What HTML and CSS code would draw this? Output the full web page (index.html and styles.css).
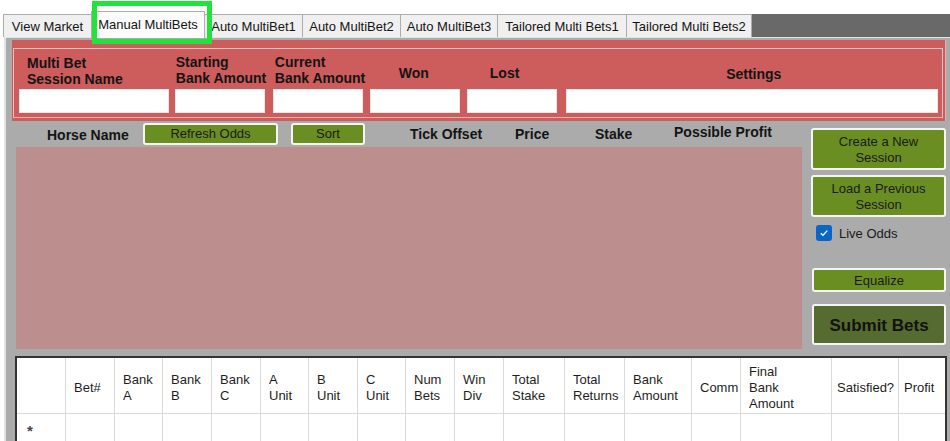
FILE: index.html
```html
<!DOCTYPE html>
<html>
<head>
<meta charset="utf-8">
<link rel="stylesheet" href="styles.css">
</head>
<body>
<div class="app">
  <div class="tabs">
    <div class="tab-lead"></div>
    <div class="tab w-view">View Market</div>
    <div class="tab active w-manual">Manual MultiBets</div>
    <div class="tab w-auto1">Auto MultiBet1</div>
    <div class="tab w-auto2">Auto MultiBet2</div>
    <div class="tab w-auto3">Auto MultiBet3</div>
    <div class="tab w-tail1">Tailored Multi Bets1</div>
    <div class="tab w-tail2">Tailored Multi Bets2</div>
    <div class="tab-fill"></div>
  </div>

  <div class="page">
    <div class="session">
      <div class="session-inner">
        <div class="field f-name">
          <div class="lbl lbl-two lbl-name">Multi Bet<br>Session Name</div>
          <div class="input"></div>
        </div>
        <div class="field f-mid g6">
          <div class="lbl lbl-two lbl-start">Starting<br>Bank Amount</div>
          <div class="input"></div>
        </div>
        <div class="field f-mid g8">
          <div class="lbl lbl-two lbl-cur">Current<br>Bank Amount</div>
          <div class="input"></div>
        </div>
        <div class="field f-mid g7">
          <div class="lbl lbl-one lbl-won">Won</div>
          <div class="input"></div>
        </div>
        <div class="field f-mid g7">
          <div class="lbl lbl-one lbl-lost">Lost</div>
          <div class="input"></div>
        </div>
        <div class="field f-settings g9">
          <div class="lbl lbl-one lbl-set">Settings</div>
          <div class="input"></div>
        </div>
      </div>
    </div>

    <div class="middle">
      <div class="main">
        <div class="hdr-row">
          <div class="hdr h-horse">Horse Name</div>
          <div class="btn btn-refresh">Refresh Odds</div>
          <div class="btn btn-sort">Sort</div>
          <div class="hdr h-tick">Tick Offset</div>
          <div class="hdr h-price">Price</div>
          <div class="hdr h-stake">Stake</div>
          <div class="hdr h-profit">Possible Profit</div>
        </div>
        <div class="pink"></div>
      </div>
      <div class="side">
        <div class="btn btn-big btn-create">Create a New<br>Session</div>
        <div class="btn btn-big btn-load">Load a Previous<br>Session</div>
        <div class="check-row">
          <span class="checkbox"><svg width="10" height="10" viewBox="0 0 10 10"><path d="M1.8 5.2 L4 7.3 L8.3 2.6" fill="none" stroke="#fff" stroke-width="1.3"/></svg></span>
          <span class="check-label">Live Odds</span>
        </div>
        <div class="btn btn-equalize">Equalize</div>
        <div class="btn btn-submit">Submit Bets</div>
      </div>
    </div>

    <div class="grid">
      <div class="cell head"></div>
      <div class="cell head">Bet#</div>
      <div class="cell head">Bank<br>A</div>
      <div class="cell head">Bank<br>B</div>
      <div class="cell head">Bank<br>C</div>
      <div class="cell head">A<br>Unit</div>
      <div class="cell head">B<br>Unit</div>
      <div class="cell head">C<br>Unit</div>
      <div class="cell head">Num<br>Bets</div>
      <div class="cell head">Win<br>Div</div>
      <div class="cell head">Total<br>Stake</div>
      <div class="cell head">Total<br>Returns</div>
      <div class="cell head">Bank<br>Amount</div>
      <div class="cell head">Comm</div>
      <div class="cell head">Final<br>Bank<br>Amount</div>
      <div class="cell head pad-s">Satisfied?</div>
      <div class="cell head pad-s">Profit</div>

      <div class="cell row rowhdr">*</div>
      <div class="cell row"></div>
      <div class="cell row"></div>
      <div class="cell row"></div>
      <div class="cell row"></div>
      <div class="cell row"></div>
      <div class="cell row"></div>
      <div class="cell row"></div>
      <div class="cell row"></div>
      <div class="cell row"></div>
      <div class="cell row"></div>
      <div class="cell row"></div>
      <div class="cell row"></div>
      <div class="cell row"></div>
      <div class="cell row"></div>
      <div class="cell row"></div>
      <div class="cell row"></div>
    </div>
  </div>

  <div class="highlight"></div>
</div>
</body>
</html>
```

FILE: styles.css
```css
* { box-sizing: border-box; }
html, body { margin: 0; padding: 0; }
body {
  background: #ffffff;
  font-family: "Liberation Sans", Arial, sans-serif;
  color: #1a1a1a;
  width: 950px;
  height: 441px;
  overflow: hidden;
}
.app {
  position: relative;
  width: 950px;
  height: 441px;
}

/* ---------- tabs ---------- */
.tabs {
  display: flex;
  align-items: flex-end;
  height: 37px;
  position: relative;
  z-index: 2;
}
.tab-lead { width: 3px; }
.tab {
  height: 23px;
  background: #f0f0f0;
  border: 1px solid #adadad;
  border-bottom: none;
  border-right: none;
  font-size: 13px;
  line-height: 24px;
  text-align: center;
  white-space: nowrap;
  color: #141414;
}
.tab.active {
  height: 27px;
  margin-bottom: -1px;
  background: #fbfbfb;
  line-height: 25px;
  border-right: 1px solid #adadad;
}
.tab.active + .tab { border-left: none; }
.w-view { width: 88px; }
.w-manual { width: 114px; }
.w-auto1 { width: 97px; }
.w-auto2 { width: 98px; }
.w-auto3 { width: 97px; }
.w-tail1 { width: 129px; }
.w-tail2 { width: 126px; border-right: 1px solid #adadad; }
.tab-fill {
  flex: 1;
  height: 23px;
  background: #696969;
}

/* ---------- page ---------- */
.page {
  margin-left: 4px;
  height: 404px;
  background: #ababab;
  border-top: 1px solid #e4e4e4;
  border-left: 2px solid #e2e2e2;
  padding-top: 2px;
}

.session {
  margin-left: 6px;
  width: 934px;
  height: 81px;
  background: #cd5c5c;
  padding: 8px 2px 3px 1px;
  border-right: 1px solid #e3b0b0;
}
.session-inner {
  height: 100%;
  border: 1px solid rgba(255, 225, 225, 0.75);
  border-bottom-color: rgba(255, 225, 225, 0.6);
  display: flex;
  align-items: flex-end;
  padding: 0 4px 4px 5px;
}
.field {
  display: flex;
  flex-direction: column;
}
.f-name { width: 150px; }
.f-mid { width: 90px; }
.f-settings { width: 373px; }
.g6 { margin-left: 6px; }
.g7 { margin-left: 7px; }
.g8 { margin-left: 8px; }
.g9 { margin-left: 9px; }

.lbl {
  height: 40px;
  font-weight: bold;
  font-size: 14px;
  line-height: 16px;
  color: #141414;
  white-space: nowrap;
}
.lbl-two { padding-top: 6px; }
.lbl-name { padding-left: 8px; }
.lbl-start { padding-left: 1px; padding-top: 5px; }
.lbl-cur { padding-left: 2px; padding-top: 5px; }
.lbl-one { padding-top: 16px; text-align: center; }
.lbl-won { padding-right: 2px; }
.lbl-lost { padding-right: 14px; }
.lbl-set { padding-top: 17px; padding-left: 4px; }

.input {
  height: 24px;
  background: #ffffff;
  border: 1px solid #e8e8e8;
}

/* ---------- middle ---------- */
.middle {
  display: flex;
  margin-left: 10px;
}
.main { width: 786px; }
.hdr-row {
  display: flex;
  align-items: flex-start;
  height: 26px;
  padding-top: 2px;
}
.hdr {
  font-weight: bold;
  font-size: 14px;
  line-height: 16px;
  color: #141414;
  white-space: nowrap;
  padding-top: 4px;
}
.h-horse { width: 127px; padding-left: 31px; }
.h-tick { margin-left: 45px; width: 105px; padding-top: 3px; }
.h-price { width: 80px; padding-top: 3px; }
.h-stake { width: 79px; padding-top: 3px; }
.h-profit { padding-top: 1px; }

.btn {
  background: #6b8e23;
  border: 2px solid #f4f4f4;
  border-radius: 3px;
  color: #1a1a1a;
  font-size: 13px;
  text-align: center;
  white-space: nowrap;
}
.btn-refresh { width: 135px; height: 22px; line-height: 17px; }
.btn-sort { width: 74px; height: 22px; line-height: 18px; margin-left: 13px; }

.pink {
  height: 202px;
  background: #bc8e8e;
}

.side {
  margin-left: 9px;
  width: 135px;
  display: flex;
  flex-direction: column;
  padding-top: 7px;
}
.btn-big {
  height: 42px;
  line-height: 16px;
  padding-top: 4px;
}
.btn-load { margin-top: 5px; }
.check-row {
  display: flex;
  align-items: center;
  margin-top: 8px;
  height: 16px;
  padding-left: 5px;
}
.checkbox {
  width: 16px;
  height: 16px;
  border-radius: 3px;
  background: #0a66c2;
  display: flex;
  align-items: center;
  justify-content: center;
}
.checkbox svg { display: block; }
.check-label {
  margin-left: 7px;
  font-size: 13px;
  color: #1a1a1a;
}
.btn-equalize {
  margin-top: 27px;
  margin-left: 1px;
  height: 24px;
  line-height: 21px;
}
.btn-submit {
  margin-top: 12px;
  margin-left: 1px;
  height: 41px;
  line-height: 39px;
  background: #556b2f;
  font-weight: bold;
  font-size: 17px;
  color: #121212;
}

/* ---------- grid ---------- */
.grid {
  margin-top: 7px;
  margin-left: 9px;
  width: 932px;
  height: 100px;
  background: #ffffff;
  border: 2px solid #333333;
  border-bottom: none;
  display: grid;
  grid-template-columns: 49px 49px 48px 49px 49px 48px 49px 48px 49px 49px 61px 60px 67px 49px 91px 67px 46px;
  grid-template-rows: 56px 40px;
  align-content: start;
}
.cell {
  border-right: 1px solid #dadada;
  border-bottom: 1px solid #dadada;
  font-size: 13px;
  line-height: 16px;
  color: #1e1e1e;
  white-space: nowrap;
}
.cell:nth-child(17n) { border-right: none; }
.head {
  display: flex;
  align-items: center;
  padding-left: 8px;
  padding-top: 5px;
}
.pad-s { padding-left: 5px; }
.rowhdr {
  font-size: 15px;
  font-weight: bold;
  color: #444;
  padding-left: 10px;
  padding-top: 9px;
}

/* ---------- annotation highlight ---------- */
.highlight {
  position: absolute;
  left: 92px;
  top: 1px;
  width: 120px;
  height: 43px;
  border: 5px solid #22e23c;
  z-index: 5;
}
```
